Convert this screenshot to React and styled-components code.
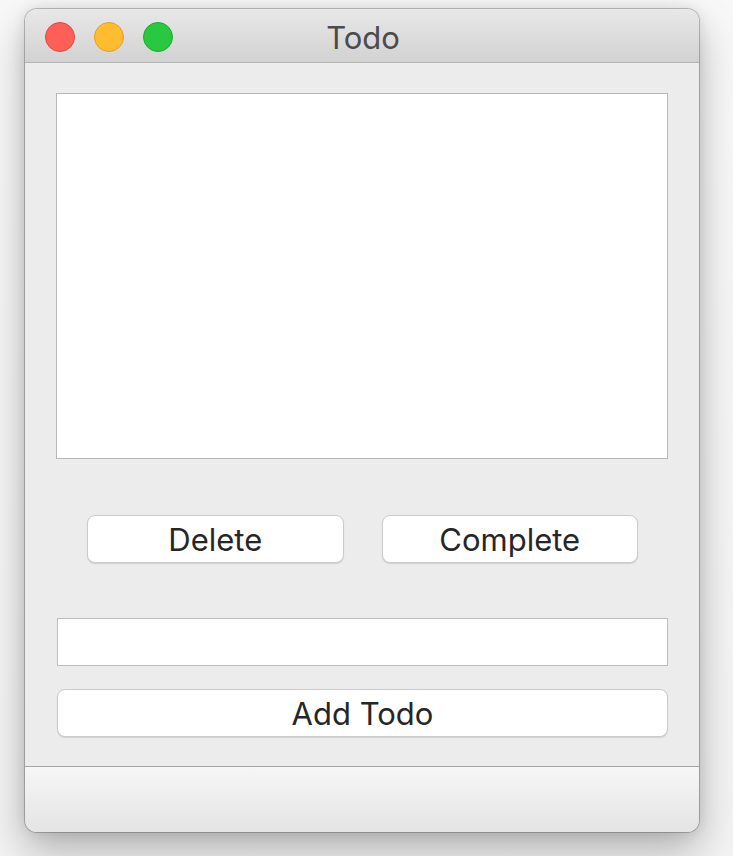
import React, { useState } from "react";
import styled, { createGlobalStyle } from "styled-components";

const Global = createGlobalStyle`
    html, body {
        margin: 0;
        padding: 0;
        background: #f7f7f7;
    }
    body {
        font-family: Inter, "Liberation Sans", sans-serif;
        -webkit-font-smoothing: antialiased;
    }
`;

const Page = styled.div`
    width: 733px;
    height: 856px;
    padding: 9px 34px 0 25px;
    box-sizing: border-box;
    background: linear-gradient(to bottom, #f8f8f8 0%, #f3f3f3 100%);
`;

const Window = styled.div`
    width: 674px;
    height: 823px;
    display: flex;
    flex-direction: column;
    border-radius: 12px;
    overflow: hidden;
    background: #ececec;
    box-shadow: 0 0 0 1px rgba(0, 0, 0, 0.22), 0 18px 40px rgba(0, 0, 0, 0.28),
        0 0 14px rgba(0, 0, 0, 0.1);
`;

const TitleBar = styled.div`
    position: relative;
    height: 54px;
    flex: none;
    display: flex;
    align-items: center;
    justify-content: center;
    background: linear-gradient(to bottom, #e9e8e9 0%, #d3d2d3 100%);
    border-bottom: 1px solid #b3b3b3;
    box-sizing: border-box;
`;

const Lights = styled.div`
    position: absolute;
    left: 20px;
    top: 13px;
    display: flex;
    gap: 19px;
`;

const Light = styled.span`
    width: 28px;
    height: 28px;
    border-radius: 50%;
    background: ${(p) => p.color};
    border: 1px solid ${(p) => p.rim};
`;

const Title = styled.div`
    font-size: 31px;
    color: #4b4b4b;
    padding: 4px 0 0 2px;
`;

const Content = styled.div`
    flex: 1;
    display: flex;
    flex-direction: column;
    padding: 30px 31px 0 31px;
`;

const ListBox = styled.div`
    height: 366px;
    background: #fff;
    border: 1px solid #b8b8b8;
    box-sizing: border-box;
`;

const ButtonRow = styled.div`
    display: flex;
    gap: 38px;
    margin: 56px 30px 0 31px;
`;

const Button = styled.button`
    flex: ${(p) => (p.wide ? "none" : "1")};
    width: ${(p) => (p.wide ? "100%" : "auto")};
    height: 48px;
    box-sizing: border-box;
    background: #fff;
    border: 1px solid #cbcbcb;
    border-radius: 8px;
    box-shadow: 0 1px 1px rgba(0, 0, 0, 0.12);
    font-family: inherit;
    font-size: 31px;
    color: #262626;
    padding: 0;
    line-height: 1;
    cursor: pointer;
`;

const Input = styled.input`
    margin: 55px 0 0 1px;
    height: 48px;
    box-sizing: border-box;
    border: 1px solid #bdbdbd;
    background: #fff;
    font-family: inherit;
    font-size: 24px;
    padding: 0 8px;
    outline: none;
`;

const AddWrap = styled.div`
    margin: 23px 0 0 1px;
    display: flex;
`;

const Footer = styled.div`
    margin-top: auto;
    height: 66px;
    flex: none;
    border-top: 1px solid #a4a4a4;
    box-sizing: border-box;
    background: linear-gradient(to bottom, #f6f6f6 0%, #e4e4e4 100%);
`;

export default function App() {
    const [text, setText] = useState("");
    return (
        <>
            <Global />
            <Page>
                <Window>
                    <TitleBar>
                        <Lights>
                            <Light color="#fe5f57" rim="#e2463f" />
                            <Light color="#febc2e" rim="#dea123" />
                            <Light color="#28c840" rim="#1aab29" />
                        </Lights>
                        <Title>Todo</Title>
                    </TitleBar>
                    <Content>
                        <ListBox />
                        <ButtonRow>
                            <Button>Delete</Button>
                            <Button>Complete</Button>
                        </ButtonRow>
                        <Input
                            value={text}
                            onChange={(e) => setText(e.target.value)}
                        />
                        <AddWrap>
                            <Button wide>Add Todo</Button>
                        </AddWrap>
                    </Content>
                    <Footer />
                </Window>
            </Page>
        </>
    );
}
